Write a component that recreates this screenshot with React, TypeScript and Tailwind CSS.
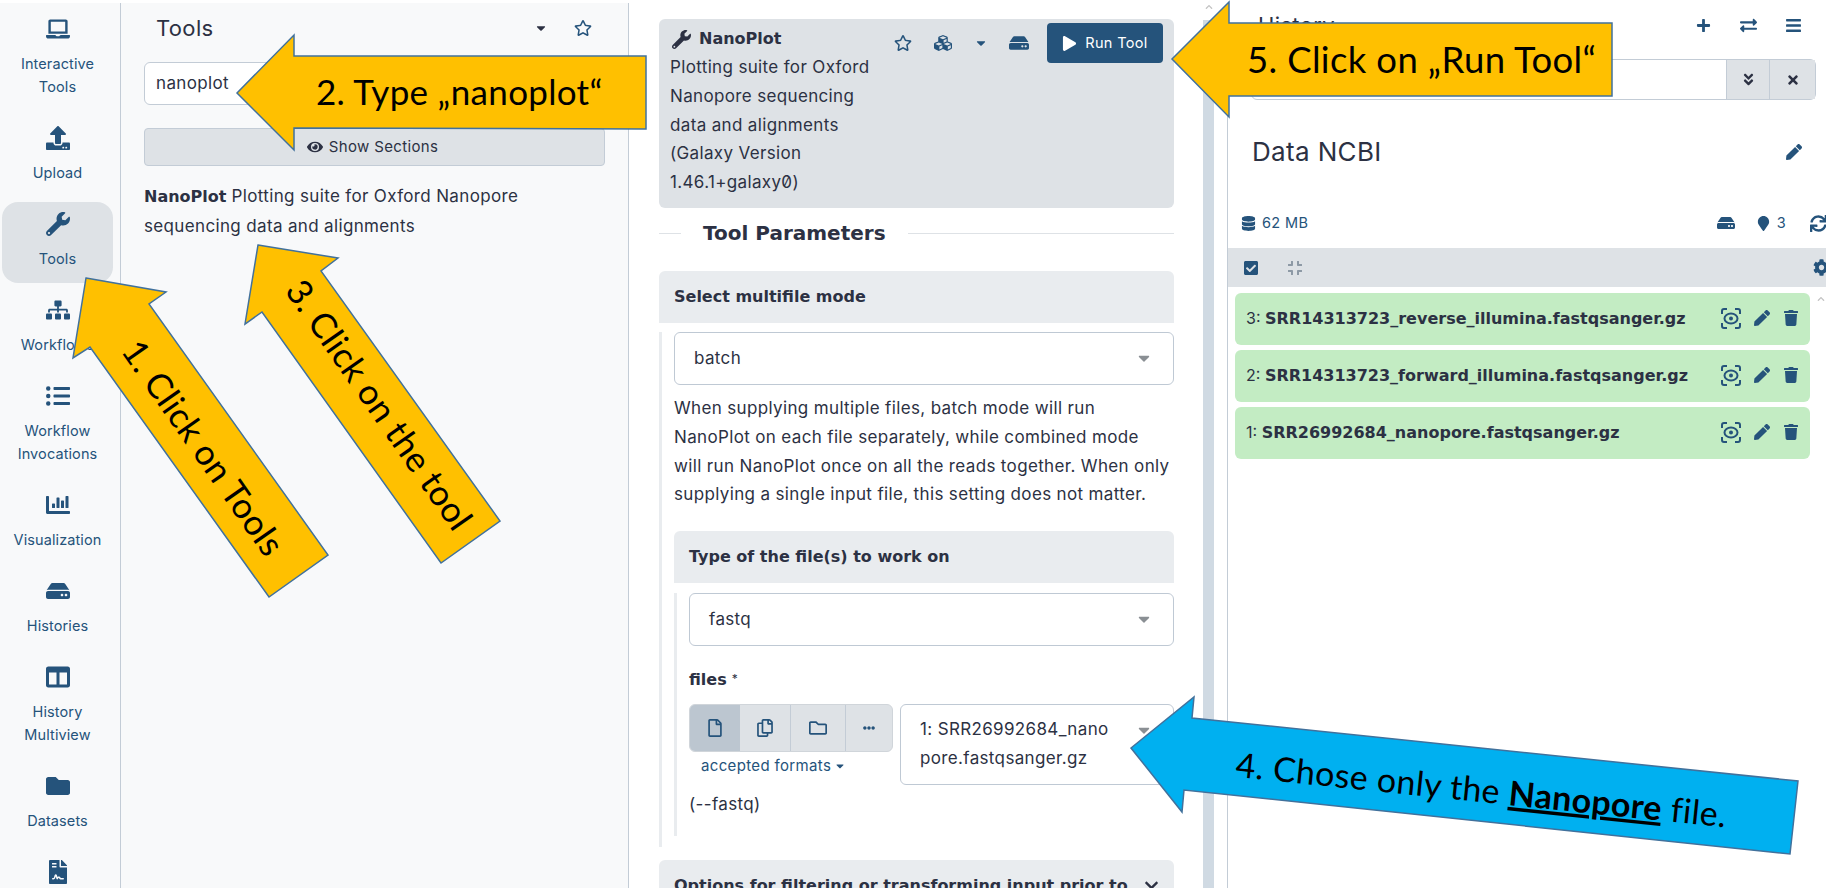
import type { ReactNode } from 'react';
import {
  FaAngleDoubleDown, FaBars, FaCaretDown, FaChartBar, FaCheckSquare, FaChevronDown, FaChevronUp, FaCog,
  FaColumns, FaCompress, FaCubes, FaDatabase, FaEllipsisH, FaExchangeAlt, FaEye, FaFileContract, FaFolder,
  FaHdd, FaLaptop, FaListUl, FaMapMarker, FaPen, FaPlay, FaPlus, FaRegCopy, FaRegFile, FaRegFolder, FaRegStar,
  FaSitemap, FaSync, FaTimes, FaTrash, FaUpload, FaWrench,
} from 'react-icons/fa';

const navItems = [
  { icon: FaLaptop, label: ['Interactive', 'Tools'] },
  { icon: FaUpload, label: ['Upload'] },
  { icon: FaWrench, label: ['Tools'], active: true },
  { icon: FaSitemap, label: ['Workflows'] },
  { icon: FaListUl, label: ['Workflow', 'Invocations'] },
  { icon: FaChartBar, label: ['Visualization'] },
  { icon: FaHdd, label: ['Histories'] },
  { icon: FaColumns, label: ['History', 'Multiview'] },
  { icon: FaFolder, label: ['Datasets'] },
  { icon: FaFileContract, label: ['Pages'] },
];

const datasets = [
  { id: '3:', name: 'SRR14313723_reverse_illumina.fastqsanger.gz' },
  { id: '2:', name: 'SRR14313723_forward_illumina.fastqsanger.gz' },
  { id: '1:', name: 'SRR26992684_nanopore.fastqsanger.gz' },
];

const heading = "font-['DejaVu_Sans'] text-[16px] font-bold tracking-normal";

// eye inside scan corners, the dataset "display" button
const ScanEye = () => (
  <svg width="20" height="21" viewBox="0 0 20 21" fill="none" stroke="#25537b" strokeWidth="2">
    <path d="M1 6V3a2 2 0 0 1 2-2h3M14 1h3a2 2 0 0 1 2 2v3M19 15v3a2 2 0 0 1-2 2h-3M6 20H3a2 2 0 0 1-2-2v-3" />
    <ellipse cx="10" cy="10.5" rx="6.5" ry="5" />
    <circle cx="10" cy="10.5" r="2" fill="#25537b" stroke="none" />
  </svg>
);

const Select = ({ className, children }: { className: string; children: ReactNode }) => (
  <div className={`relative rounded-[6px] border border-[#bfc9d4] bg-white text-[#2c3143] ${className}`}>
    {children}
    <FaCaretDown className="absolute right-[20px] top-[16px] text-[#8a8f94]" size={18} />
  </div>
);

const Arrows = () => (
  <svg className="absolute inset-0 pointer-events-none" width="1826" height="888" viewBox="0 0 1826 888">
    <g fill="#ffc000" stroke="#41719c" strokeWidth="1.5">
      <polygon points="86,278 166,292 149,304 328,555 269,597 90,347 73,358" />
      <polygon points="237,93 294,35 294,56 646,56 646,129 294,128 294,150" />
      <polygon points="258,245 338,258 321,271 500,521 441,563 262,312 245,324" />
      <polygon points="1172,59 1229,2 1229,23 1612,23 1612,96 1229,96 1229,117" />
    </g>
    <polygon points="1131,748 1194,697 1192,718 1798,781 1790,854 1184,790 1182,812" fill="#00b0f0" stroke="#41719c" strokeWidth="1.5" />
    <g className="font-['Lato']" fill="#000" fontSize="35">
      <text x="316" y="105" letterSpacing="0.3">2. Type „nanoplot“</text>
      <text x="1247" y="73" fontSize="36.5">5. Click on „Run Tool“</text>
      <text transform="translate(193 455) rotate(55)" textAnchor="middle">1. Click on Tools</text>
      <text transform="translate(369 412) rotate(55)" textAnchor="middle">3. Click on the tool</text>
      <text transform="translate(1480 802) rotate(5.9)" textAnchor="middle" fontSize="34">
        4. Chose only the <tspan fontWeight="700" textDecoration="underline">Nanopore</tspan> file.
      </text>
    </g>
  </svg>
);

export default function App() {
  return (
    <div className="relative flex h-screen w-full overflow-hidden bg-white pt-[3px] font-['Inter'] text-[17px] leading-[28.8px] tracking-[0.35px] text-[#2c3143]">
      {/* Activity bar */}
      <nav className="w-[121px] shrink-0 overflow-hidden border-r border-[#c3ccd6] bg-[#f8f9fa] pt-[4px]">
        {navItems.map(({ icon: Icon, label, active }) => (
          <div
            key={label.join(' ')}
            className={`mx-[2px] mb-[5px] flex w-[111px] flex-col items-center rounded-[16px] pb-[13px] pt-[10px] text-[14.5px] leading-[23px] tracking-[0.1px] text-[#25537b] ${active ? 'bg-[#dee2e6]' : ''}`}
          >
            <Icon size={24} className="mb-[11px] shrink-0" />
            {label.map((line) => (
              <span key={line}>{line}</span>
            ))}
          </div>
        ))}
      </nav>

      {/* Tool panel */}
      <aside className="w-[508px] shrink-0 border-r border-[#c3ccd6] bg-[#f8f9fa] px-[23px]">
        <div className="flex h-[59px] items-center pb-[10px] pl-[12px] pr-[13px]">
          <span className="text-[22px] leading-[28px]">Tools</span>
          <FaCaretDown className="ml-auto mr-[26px]" size={14} />
          <FaRegStar className="text-[#25537b]" size={18} />
        </div>
        <div className="flex h-[43px] items-center rounded-[6px] border border-[#c3ccd6] bg-white px-[11px]">nanoplot</div>
        <div className="mt-[23px] flex h-[38px] items-center justify-center gap-[6px] rounded-[4px] border border-[#c3ccd6] bg-[#dee2e6] pr-[4px] text-[15px] text-[#2c3143]">
          <FaEye size={16} /> Show Sections
        </div>
        <p className="mt-[16px] w-[400px]">
          <b className={heading}>NanoPlot</b> Plotting suite for Oxford Nanopore sequencing data and alignments
        </p>
      </aside>

      {/* Center panel */}
      <main className="w-[574px] shrink-0 pl-[30px] pr-[29px] pt-[16px]">
        <div className="flex h-[189px] rounded-[6px] bg-[#dee2e6] pl-[11px] pr-[11px]">
          <div className="w-[212px] pt-[7px]">
            <div className={`flex h-[27px] items-center ${heading}`}>
              <FaWrench size={19} className="mr-[8px] ml-[2px]" /> NanoPlot
            </div>
            <p>Plotting suite for Oxford Nanopore sequencing data and alignments</p>
            <p className="slashed-zero">(Galaxy Version 1.46.1+galaxy0)</p>
          </div>
          <div className="ml-auto flex h-[40px] items-center mt-[4px]">
            <FaRegStar size={18} className="text-[#25537b]" />
            <FaCubes size={18} className="ml-[22px] text-[#25537b]" />
            <FaCaretDown size={14} className="ml-[22px] text-[#25537b]" />
            <FaHdd size={20} className="ml-[21px] text-[#25537b]" />
            <div className="ml-[18px] flex h-[40px] w-[116px] items-center justify-center gap-[8px] rounded-[4px] bg-[#25537b] text-[14.5px] text-white">
              <FaPlay size={15} /> Run Tool
            </div>
          </div>
        </div>

        <div className="flex h-[50px] items-center font-['DejaVu_Sans'] text-[20px] font-bold tracking-normal">
          <div className="h-px w-[22px] bg-[#dee2e6]" />
          <span className="px-[22px] whitespace-nowrap">Tool Parameters</span>
          <div className="h-px flex-1 bg-[#dee2e6]" />
        </div>

        <section className="mt-[13px]">
          <div className={`flex h-[52px] items-center rounded-t-[6px] bg-[#e9ecef] px-[15px] ${heading}`}>Select multifile mode</div>
          <div className="border-l-[3px] border-[#e9ecef] pb-[11px] pl-[12px]">
            <Select className="mt-[9px] flex h-[53px] items-center pl-[19px]">batch</Select>
            <p className="mt-[9px]">
              When supplying multiple files, batch mode will run NanoPlot on each file separately, while combined mode<br />
              will run NanoPlot once on all the reads together. When only supplying a single input file, this setting does not matter.
            </p>

            <div className="mt-[22px]">
              <div className={`flex h-[52px] items-center rounded-t-[6px] bg-[#e9ecef] px-[15px] ${heading}`}>Type of the file(s) to work on</div>
              <div className="border-l-[3px] border-[#e9ecef] pb-[17px] pl-[12px]">
                <Select className="mt-[10px] flex h-[53px] items-center pl-[19px]">fastq</Select>
                <div className="mt-[21px] leading-[24px]">
                  <b className={heading}>files</b> <span className="text-[12px] align-top">*</span>
                </div>
                <div className="mt-[12px] flex">
                  <div className="w-[204px] shrink-0">
                    <div className="flex h-[48px] overflow-hidden rounded-[6px] border border-[#d0d5da] bg-[#dee2e6] text-[#25537b]">
                      <div className="flex w-[50px] items-center justify-center bg-[#bcc6d0]"><FaRegFile size={18} /></div>
                      <div className="flex w-[51px] items-center justify-center border-r border-[#c3ccd6]"><FaRegCopy size={18} /></div>
                      <div className="flex w-[55px] items-center justify-center border-r border-[#c3ccd6]"><FaRegFolder size={18} /></div>
                      <div className="flex flex-1 items-center justify-center"><FaEllipsisH size={12} /></div>
                    </div>
                    <div className="mt-[2px] flex items-center gap-[3px] pl-[12px] text-[15px] leading-[24px] text-[#25537b]">
                      accepted formats <FaCaretDown size={12} />
                    </div>
                  </div>
                  <Select className="ml-[7px] h-[81px] flex-1 py-[10px] pl-[19px] pr-[55px] break-all">
                    1: SRR26992684_nanopore.fastqsanger.gz
                  </Select>
                </div>
                <div className="mt-[5px]">(--fastq)</div>
              </div>
            </div>
          </div>
        </section>

        <div className={`mt-[13px] flex h-[52px] items-center rounded-t-[6px] bg-[#e9ecef] px-[15px] ${heading}`}>
          <span className="whitespace-nowrap">Options for filtering or transforming input prior to</span>
          <FaChevronDown size={15} className="ml-auto" />
        </div>
      </main>

      {/* Scrollbar */}
      <div className="flex w-[11px] shrink-0 flex-col items-center">
        <div className="flex h-[17px] items-start"><FaChevronUp size={8} className="text-[#c4c4c4]" /></div>
        <div className="w-full flex-1 bg-[#d0dae3]" />
      </div>

      {/* History panel */}
      <section className="ml-[13px] flex-1 overflow-hidden border-l border-[#c3ccd6] bg-white">
        <div className="flex h-[56px] items-center pb-[12px] pl-[30px] pr-[24px] text-[#25537b]">
          <span className="text-[22px] text-[#2c3143]">History</span>
          <FaPlus size={15} className="ml-auto" />
          <FaExchangeAlt size={17} className="ml-[29px]" />
          <FaBars size={17} className="ml-[28px]" />
        </div>
        <div className="ml-[23px] mr-[10px] flex h-[41px] rounded-[6px] border border-[#c3ccd6]">
          <div className="flex-1" />
          <div className="flex w-[44px] items-center justify-center border-x border-[#c3ccd6] bg-[#dee2e6]"><FaAngleDoubleDown size={15} /></div>
          <div className="flex w-[45px] items-center justify-center bg-[#dee2e6]"><FaTimes size={14} /></div>
        </div>
        <div className="mt-[34px] flex h-[36px] items-center pl-[24px] pr-[24px]">
          <span className="text-[26px] leading-[36px]">Data NCBI</span>
          <FaPen size={16} className="ml-auto text-[#25537b]" />
        </div>
        <div className="mt-[41px] flex h-[24px] items-center pl-[13px] text-[14.5px] text-[#25537b]">
          <FaDatabase size={15} className="mr-[6px]" /> 62 MB
          <FaHdd size={18} className="ml-auto" />
          <FaMapMarker size={15} className="ml-[21px]" />
          <span className="ml-[6px]">3</span>
          <FaSync size={17} className="ml-[24px] -mr-[1px]" />
        </div>
        <div className="mt-[13px] flex h-[39px] items-center bg-[#dee2e6] pl-[15px] text-[#25537b]">
          <FaCheckSquare size={16} />
          <FaCompress size={16} className="ml-[28px] text-[#8d99a5]" />
          <FaCog size={17} className="ml-auto -mr-[4px]" />
        </div>
        <div className="relative mt-[6px] flex flex-col gap-[5px] pl-[7px]">
          {datasets.map((d) => (
            <div key={d.id} className="flex h-[52px] w-[575px] rounded-[6px] bg-[#c3ecc3] pl-[11px] pr-[11px] pt-[13px] leading-[24px]">
              <span className="whitespace-nowrap text-[16px] tracking-normal">
                {d.id} <b className="font-['DejaVu_Sans'] text-[16px] font-bold">{d.name}</b>
              </span>
              <div className="ml-auto flex h-[24px] items-center text-[#25537b]">
                <ScanEye />
                <FaPen size={16} className="ml-[13px]" />
                <FaTrash size={16} className="ml-[13px]" />
              </div>
            </div>
          ))}
          <FaChevronUp size={8} className="absolute right-[1px] top-[2px] text-[#c4c4c4]" />
        </div>
      </section>

      <Arrows />
    </div>
  );
}
